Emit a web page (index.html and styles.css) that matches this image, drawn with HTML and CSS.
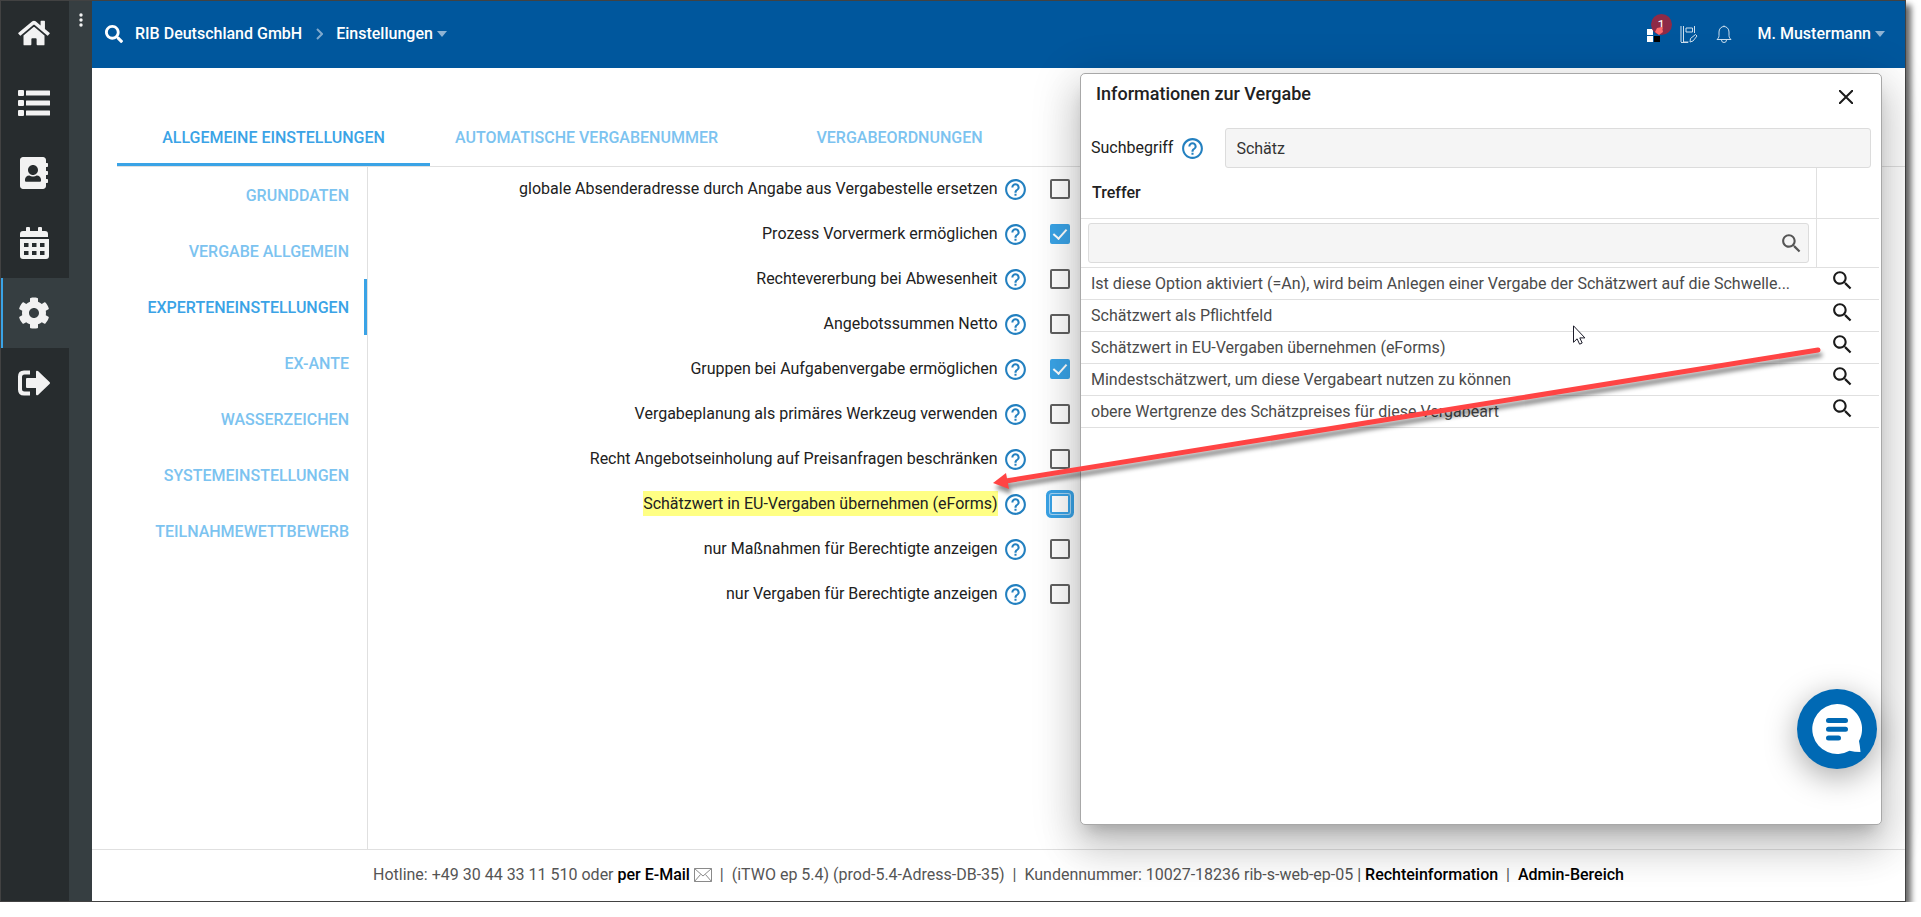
FILE: index.html
```html
<!DOCTYPE html>
<html lang="de">
<head>
<meta charset="utf-8">
<title>Einstellungen – RIB Deutschland GmbH</title>
<link rel="stylesheet" href="styles.css">
</head>
<body>
<svg class="sprite" aria-hidden="true">
  <symbol id="i-help" viewBox="0 0 24 24"><path d="M11 18h2v-2h-2v2zm1-16C6.48 2 2 6.48 2 12s4.48 10 10 10 10-4.48 10-10S17.52 2 12 2zm0 18c-4.41 0-8-3.59-8-8s3.59-8 8-8 8 3.59 8 8-3.59 8-8 8zm0-14c-2.21 0-4 1.79-4 4h2c0-1.1.9-2 2-2s2 .9 2 2c0 2-3 1.75-3 5h2c0-2.25 3-2.5 3-5 0-2.21-1.79-4-4-4z"/></symbol>
  <symbol id="i-search" viewBox="0 0 24 24"><path d="M15.5 14h-.79l-.28-.27C15.41 12.59 16 11.11 16 9.5 16 5.91 13.09 3 9.5 3S3 5.91 3 9.5 5.91 16 9.5 16c1.61 0 3.09-.59 4.23-1.57l.27.28v.79l5 4.99L20.49 19l-4.99-5zm-6 0C7.01 14 5 11.99 5 9.5S7.01 5 9.5 5 14 7.01 14 9.5 11.99 14 9.5 14z"/></symbol>
</svg>

<div class="window">
  <nav class="rail" aria-label="Hauptnavigation">
    <a class="rail-item rail-first" href="#" aria-label="Startseite"><svg width="32" height="28" viewBox="0 0 576 512"><path d="M280.37 148.26L96 300.11V464a16 16 0 0 0 16 16l112.06-.29a16 16 0 0 0 15.92-16V368a16 16 0 0 1 16-16h64a16 16 0 0 1 16 16v95.64a16 16 0 0 0 16 16.05L464 480a16 16 0 0 0 16-16V300L295.67 148.26a12.19 12.19 0 0 0-15.3 0zM571.6 251.47L488 182.56V44.05a12 12 0 0 0-12-12h-56a12 12 0 0 0-12 12v72.61L318.47 43a48 48 0 0 0-61 0L4.34 251.47a12 12 0 0 0-1.6 16.9l25.5 31A12 12 0 0 0 45.15 301l235.22-193.74a12.19 12.19 0 0 1 15.3 0L530.9 301a12 12 0 0 0 16.9-1.6l25.5-31a12 12 0 0 0-1.7-16.93z"/></svg></a>
    <a class="rail-item" href="#" aria-label="Liste"><svg width="32" height="28" viewBox="0 0 32 28"><rect x="0" y="1" width="6" height="6" rx="1"/><rect x="0" y="11" width="6" height="6" rx="1"/><rect x="0" y="21" width="6" height="6" rx="1"/><rect x="8" y="1.5" width="24" height="5" rx=".5"/><rect x="8" y="11.5" width="24" height="5" rx=".5"/><rect x="8" y="21.5" width="24" height="5" rx=".5"/></svg></a>
    <a class="rail-item" href="#" aria-label="Adressbuch"><svg width="28" height="32" viewBox="0 0 448 512"><path d="M436 160c6.6 0 12-5.400 12-12v-40c0-6.600-5.400-12-12-12h-20V48c0-26.500-21.500-48-48-48H48C21.500 0 0 21.500 0 48v416c0 26.500 21.500 48 48 48h320c26.500 0 48-21.500 48-48v-48h20c6.600 0 12-5.400 12-12v-40c0-6.600-5.400-12-12-12h-20v-64h20c6.600 0 12-5.400 12-12v-40c0-6.600-5.400-12-12-12h-20v-64h20zm-228-32c44 0 80 36 80 80s-36 80-80 80-80-36-80-80 36-80 80-80zm128 250c0 10.600-10 19.200-22.400 19.200H102.400C90 397.200 80 388.600 80 378v-19.200c0-31.800 30.100-61.600 67.200-61.600h5c12.300 9.100 35.700 16 55.800 16s43.600-6.900 55.800-16h5c37.100 0 67.200 29.800 67.200 61.600v19.200z"/></svg></a>
    <a class="rail-item" href="#" aria-label="Kalender"><svg width="30" height="32" viewBox="0 0 30 32"><path fill-rule="evenodd" d="M1 10V7a3 3 0 0 1 3-3h3V1q0-1 1-1h2q1 0 1 1v3h8V1q0-1 1-1h2q1 0 1 1v3h3a3 3 0 0 1 3 3v3zM1 12h29v17a3 3 0 0 1-3 3H4a3 3 0 0 1-3-3zM5 16v4h4.500v-4zM13 16v4h4.500v-4zM21 16v4h4.500v-4zM5 24v4h4.500v-4zM13 24v4h4.500v-4zM21 24v4h4.500v-4z"/></svg></a>
    <a class="rail-item rail-active" href="#" aria-label="Einstellungen"><svg width="32" height="32" viewBox="0 0 512 512"><path d="M487.400 315.700l-42.600-24.600c4.300-23.200 4.300-47 0-70.200l42.600-24.600c4.900-2.800 7.100-8.600 5.500-14-11.100-35.600-30-67.800-54.700-94.600-3.800-4.100-10-5.100-14.800-2.300L380.800 110c-17.900-15.400-38.500-27.300-60.800-35.100V25.800c0-5.600-3.900-10.500-9.400-11.700-36.700-8.200-74.300-7.800-109.200 0-5.500 1.200-9.400 6.100-9.400 11.700V75c-22.200 7.900-42.800 19.800-60.800 35.100L88.700 85.500c-4.900-2.800-11-1.900-14.800 2.300-24.700 26.700-43.600 58.900-54.700 94.600-1.700 5.400.6 11.200 5.500 14L67.300 221c-4.300 23.200-4.300 47 0 70.200l-42.600 24.600c-4.900 2.800-7.100 8.600-5.500 14 11.100 35.600 30 67.800 54.700 94.600 3.800 4.100 10 5.100 14.800 2.300l42.600-24.600c17.900 15.400 38.500 27.300 60.800 35.100v49.200c0 5.600 3.900 10.500 9.400 11.700 36.700 8.200 74.300 7.800 109.200 0 5.500-1.200 9.400-6.100 9.400-11.700v-49.200c22.200-7.900 42.800-19.800 60.800-35.100l42.600 24.600c4.900 2.800 11 1.900 14.800-2.300 24.700-26.700 43.600-58.900 54.700-94.600 1.500-5.500-.7-11.300-5.600-14.100zM256 336c-44.100 0-80-35.900-80-80s35.900-80 80-80 80 35.900 80 80-35.900 80-80 80z"/></svg></a>
    <a class="rail-item" href="#" aria-label="Abmelden"><svg width="32" height="26" viewBox="0 0 32 26"><path d="M12 .5v4H6.500Q4 4.500 4 7v12q0 2.500 2.500 2.500H12v4H6Q0 25.500 0 19.500v-13Q0 .5 6 .5zM8 9q0-1 1-1h9V2q0-2 2-1l11.500 11q1 1 0 2L20 25q-2 1-2-1v-6H9q-1 0-1-1z"/></svg></a>
  </nav>
  <div class="handle"><button class="plain" type="button" aria-label="Menü"><svg width="4" height="14" viewBox="0 0 4 14"><circle cx="2" cy="2" r="1.700"/><circle cx="2" cy="7" r="1.700"/><circle cx="2" cy="12" r="1.700"/></svg></button></div>

  <div class="page">
    <header class="topbar">
      <button class="plain top-search" type="button" aria-label="Suchen"><svg width="18" height="18" viewBox="0 0 512 512"><path d="M505 442.700L405.300 343c-4.500-4.500-10.600-7-17-7H372c27.600-35.300 44-79.700 44-128C416 93.100 322.900 0 208 0S0 93.100 0 208s93.100 208 208 208c48.300 0 92.700-16.400 128-44v16.300c0 6.400 2.500 12.500 7 17l99.700 99.700c9.400 9.400 24.600 9.400 33.900 0l28.300-28.300c9.400-9.400 9.400-24.600.1-34zM208 336c-70.700 0-128-57.200-128-128 0-70.700 57.200-128 128-128 70.700 0 128 57.200 128 128 0 70.700-57.200 128-128 128z"/></svg></button>
      <a class="crumb" href="#">RIB Deutschland GmbH</a>
      <svg class="chevron" width="7" height="12" viewBox="0 0 7 12"><path d="M1 1l5 5-5 5"/></svg>
      <button class="plain crumb" type="button">Einstellungen<svg class="caret" width="10" height="6" viewBox="0 0 10 6"><path d="M0 0h10L5 6z"/></svg></button>
      <div class="top-tools">
        <button class="plain apps" type="button" aria-label="Anwendungen">
          <svg width="16" height="16" viewBox="0 0 16 16"><path fill="#fff" d="M0 3h6v6H0zM0 10h6v6H0z"/><path fill="#000" d="M7 10h6v6H7z"/></svg>
          <span class="badge">1</span>
          <svg class="diamond" width="8" height="8" viewBox="0 0 8 8"><path d="M2 1l5-1 1 5-4 3-4-3z"/></svg>
        </button>
        <button class="plain note" type="button" aria-label="Notizen"><svg width="18" height="18" viewBox="0 0 18 18"><path d="M1 1v16M3.500 1v16h5M14.500 1v7M6 3h6.500v4H6zM1 17.500h7M10.500 13.500l5-4 1.500 1.500-4 5-3 1z"/></svg></button>
        <button class="plain bell" type="button" aria-label="Benachrichtigungen"><svg width="16" height="18" viewBox="0 0 16 18"><path d="M1 14.500c1-1 2-2 2-4V7a5 5.500 0 0 1 10 0v3.500c0 2 1 3 2 4zM8 1.500V.5M5.500 15a2.500 2.500 0 0 0 5 0"/></svg></button>
        <button class="plain crumb" type="button">M. Mustermann<svg class="caret" width="10" height="6" viewBox="0 0 10 6"><path d="M0 0h10L5 6z"/></svg></button>
      </div>
    </header>

    <nav class="tabs" aria-label="Bereiche">
      <a class="tab tab-active" href="#">ALLGEMEINE EINSTELLUNGEN</a>
      <a class="tab" href="#">AUTOMATISCHE VERGABENUMMER</a>
      <a class="tab" href="#">VERGABEORDNUNGEN</a>
    </nav>

    <main class="content">
      <nav class="subnav" aria-label="Einstellungen">
        <a class="sub" href="#">GRUNDDATEN</a>
        <a class="sub" href="#">VERGABE ALLGEMEIN</a>
        <a class="sub sub-active" href="#">EXPERTENEINSTELLUNGEN</a>
        <a class="sub" href="#">EX-ANTE</a>
        <a class="sub" href="#">WASSERZEICHEN</a>
        <a class="sub" href="#">SYSTEMEINSTELLUNGEN</a>
        <a class="sub" href="#">TEILNAHMEWETTBEWERB</a>
      </nav>
      <form class="options">
        <div class="option"><label for="o1">globale Absenderadresse durch Angabe aus Vergabestelle ersetzen</label><button class="plain help" type="button" aria-label="Hilfe"><svg><use href="#i-help"/></svg></button><input type="checkbox" id="o1"></div>
        <div class="option"><label for="o2">Prozess Vorvermerk ermöglichen</label><button class="plain help" type="button" aria-label="Hilfe"><svg><use href="#i-help"/></svg></button><input type="checkbox" id="o2" checked></div>
        <div class="option"><label for="o3">Rechtevererbung bei Abwesenheit</label><button class="plain help" type="button" aria-label="Hilfe"><svg><use href="#i-help"/></svg></button><input type="checkbox" id="o3"></div>
        <div class="option"><label for="o4">Angebotssummen Netto</label><button class="plain help" type="button" aria-label="Hilfe"><svg><use href="#i-help"/></svg></button><input type="checkbox" id="o4"></div>
        <div class="option"><label for="o5">Gruppen bei Aufgabenvergabe ermöglichen</label><button class="plain help" type="button" aria-label="Hilfe"><svg><use href="#i-help"/></svg></button><input type="checkbox" id="o5" checked></div>
        <div class="option"><label for="o6">Vergabeplanung als primäres Werkzeug verwenden</label><button class="plain help" type="button" aria-label="Hilfe"><svg><use href="#i-help"/></svg></button><input type="checkbox" id="o6"></div>
        <div class="option"><label for="o7">Recht Angebotseinholung auf Preisanfragen beschränken</label><button class="plain help" type="button" aria-label="Hilfe"><svg><use href="#i-help"/></svg></button><input type="checkbox" id="o7"></div>
        <div class="option"><label for="o8"><mark>Schätzwert in EU-Vergaben übernehmen (eForms)</mark></label><button class="plain help" type="button" aria-label="Hilfe"><svg><use href="#i-help"/></svg></button><input class="focused" type="checkbox" id="o8"></div>
        <div class="option"><label for="o9">nur Maßnahmen für Berechtigte anzeigen</label><button class="plain help" type="button" aria-label="Hilfe"><svg><use href="#i-help"/></svg></button><input type="checkbox" id="o9"></div>
        <div class="option"><label for="o10">nur Vergaben für Berechtigte anzeigen</label><button class="plain help" type="button" aria-label="Hilfe"><svg><use href="#i-help"/></svg></button><input type="checkbox" id="o10"></div>
      </form>
    </main>

    <footer class="footer">
      <p>Hotline: +49 30 44 33 11 510 oder <a href="#">per E-Mail</a> <svg class="mail" width="18" height="14" viewBox="0 0 18 14"><path d="M.5.5h17v13H.5zM.5.5L9 8 17.500.5M.5 13.500l6-7M17.500 13.500l-6-7"/></svg> &nbsp;|&nbsp; (iTWO ep 5.4) (prod-5.4-Adress-DB-35) &nbsp;|&nbsp; Kundennummer: 10027-18236 rib-s-web-ep-05 | <a href="#">Rechteinformation</a> &nbsp;|&nbsp; <a href="#">Admin-Bereich</a></p>
    </footer>
  </div>

  <section class="dialog" role="dialog" aria-labelledby="dlg-title">
    <div class="dialog-head">
      <h2 id="dlg-title">Informationen zur Vergabe</h2>
      <button class="plain close" type="button" aria-label="Schließen"><svg width="14" height="14" viewBox="0 0 14 14"><path d="M0 0l14 14M14 0L0 14"/></svg></button>
    </div>
    <div class="term">
      <label for="term">Suchbegriff</label>
      <button class="plain help" type="button" aria-label="Hilfe"><svg><use href="#i-help"/></svg></button>
      <input class="field" id="term" type="text" value="Schätz">
    </div>
    <table class="hits">
      <thead>
        <tr class="hits-title"><th scope="col">Treffer</th><td></td></tr>
        <tr class="hits-filter"><td><div class="filter"><input class="field" type="text" aria-label="Treffer filtern"><svg class="filter-icon"><use href="#i-search"/></svg></div></td><td></td></tr>
      </thead>
      <tbody>
        <tr><td class="hit">Ist diese Option aktiviert (=An), wird beim Anlegen einer Vergabe der Schätzwert auf die Schwelle...</td><td class="act"><button class="plain" type="button" aria-label="Anzeigen"><svg><use href="#i-search"/></svg></button></td></tr>
        <tr><td class="hit">Schätzwert als Pflichtfeld</td><td class="act"><button class="plain" type="button" aria-label="Anzeigen"><svg><use href="#i-search"/></svg></button></td></tr>
        <tr><td class="hit">Schätzwert in EU-Vergaben übernehmen (eForms)</td><td class="act"><button class="plain" type="button" aria-label="Anzeigen"><svg><use href="#i-search"/></svg></button></td></tr>
        <tr><td class="hit">Mindestschätzwert, um diese Vergabeart nutzen zu können</td><td class="act"><button class="plain" type="button" aria-label="Anzeigen"><svg><use href="#i-search"/></svg></button></td></tr>
        <tr><td class="hit">obere Wertgrenze des Schätzpreises für diese Vergabeart</td><td class="act"><button class="plain" type="button" aria-label="Anzeigen"><svg><use href="#i-search"/></svg></button></td></tr>
      </tbody>
    </table>

    <button class="plain chat" type="button" aria-label="Chat"><svg width="50" height="50" viewBox="0 0 50 50"><path fill="#fff" d="M25 0a25 25 0 0 1 22 37q1 5 1.500 11-6 0-11-1.200A25 25 0 1 1 25 0z"/><path class="chat-lines" d="M16.500 16.500h17M16.500 25.300h17M16.500 34h10"/></svg></button>

    <svg class="arrow" width="840" height="150" viewBox="0 0 840 150" aria-hidden="true"><path d="M828 9L16 140" fill="none" stroke="#ff4444" stroke-width="5" stroke-linecap="round"/><path d="M3 142l13-10 3 16z" fill="#ff4444"/></svg>
    <svg class="cursor" width="13" height="20" viewBox="0 0 13 20" aria-hidden="true"><path d="M.5.800v16.500l3.600-3.500 2.500 5.400 2.600-1.200-2.400-5.100h5.100z" fill="#fff" stroke="#1c1c2a"/></svg>
  </section>
</div>
</body>
</html>
```

FILE: styles.css
```css
* { box-sizing: border-box; }

body {
  margin: 0;
  background: #fff;
  color: #212121;
  font: 16px/24px Roboto, "Liberation Sans", sans-serif;
}

a { color: inherit; text-decoration: none; }
svg { display: block; }
.sprite { display: none; }

.plain {
  margin: 0;
  padding: 0;
  border: 0;
  background: none;
  color: inherit;
  font: inherit;
  cursor: pointer;
}

.window {
  position: relative;
  display: flex;
  height: calc(100vh - 15px);
  margin-right: 15px;
  border: 1px solid #424242;
  box-shadow: 5px 5px 6px rgba(0, 0, 0, .6);
}

/* icon rail */
.rail {
  flex: none;
  width: 68px;
  background: #272c2e;
}
.rail-item {
  display: flex;
  align-items: center;
  justify-content: center;
  height: 70px;
  padding-right: 2px;
}
.rail-first { height: 67px; padding-bottom: 3px; }
.rail-active {
  background: #363e41;
  border-left: 2px solid #3aa3e6;
  padding-right: 4px;
}
.rail-item svg { fill: #f2f2f2; }
.handle {
  flex: none;
  display: flex;
  justify-content: center;
  align-items: flex-start;
  width: 23px;
  padding-top: 12px;
  background: #363e41;
}
.handle svg { fill: #f2f2f2; }

.page {
  flex: 1;
  min-width: 0;
  display: flex;
  flex-direction: column;
}

/* top bar */
.topbar {
  flex: none;
  display: flex;
  align-items: center;
  height: 67px;
  padding: 0 20px 2px 13px;
  background: #00579d;
  color: #fff;
  font-weight: 500;
}
.top-search { margin-right: 12px; }
.top-search svg { fill: #fff; }
.crumb { display: flex; align-items: center; white-space: nowrap; }
.chevron { margin: 0 13px 0 14px; fill: none; stroke: #7fa9cd; stroke-width: 2; }
.caret { margin-left: 4px; fill: #8fb3d3; }
.top-tools { display: flex; align-items: center; margin-left: auto; }
.apps { position: relative; width: 16px; margin-right: 17px; }
.badge {
  position: absolute;
  left: 4px;
  top: -12px;
  width: 21px;
  height: 21px;
  border-radius: 50%;
  background: #8e2a47;
  font-size: 13px;
  font-weight: 400;
  line-height: 21px;
}
.diamond { position: absolute; left: 8px; top: 1px; fill: #ff6b6b; }
.note { margin-right: 18px; }
.note svg, .bell svg { fill: none; stroke: #cfe0ee; stroke-width: 1; }
.bell { margin-right: 26px; }

/* tabs */
.tabs {
  flex: none;
  display: flex;
  align-items: flex-end;
  height: 99px;
  margin-left: 25px;
  border-bottom: 1px solid #e0e0e0;
}
.tab {
  width: 313px;
  padding: 14px 0 13px;
  border-bottom: 3px solid transparent;
  color: #7cc3f0;
  font-weight: 500;
  text-align: center;
}
.tab-active { color: #3aa3e6; border-bottom-color: #3aa3e6; }

/* content */
.content {
  flex: 1;
  display: flex;
  min-height: 0;
  margin-left: 25px;
}
.subnav {
  flex: none;
  width: 251px;
  border-right: 1px solid #e0e0e0;
}
.sub {
  display: block;
  height: 56px;
  padding-right: 15px;
  border-right: 3px solid transparent;
  color: #7cc3f0;
  font-weight: 500;
  line-height: 58px;
  text-align: right;
}
.sub-active { color: #3aa3e6; border-right-color: #3aa3e6; }

.options { flex: 1; padding-right: 26px; }
.option {
  display: grid;
  grid-template-columns: 41.667% 35px 54px;
  align-items: center;
  height: 44px;
  margin-bottom: 1px;
}
.option label { text-align: right; white-space: nowrap; }
.option mark {
  padding: 3px 0;
  background: #ffff84;
  color: inherit;
}
.help { display: block; justify-self: center; }
.help svg { width: 25px; height: 25px; fill: #2380c0; }

.option input {
  appearance: none;
  width: 20px;
  height: 20px;
  margin: 0;
  justify-self: center;
  border: 2px solid #616161;
  border-radius: 2px;
}
.option input:checked {
  border-color: #3aa3e6;
  background: #3aa3e6;
  display: grid;
  place-items: center;
}
.option input:checked::before {
  content: "";
  width: 6px;
  height: 11px;
  margin-bottom: 3px;
  border: solid #fff;
  border-width: 0 2px 2px 0;
  transform: rotate(42deg);
}
.option .focused {
  border-color: #3aa3e6;
  box-shadow: 0 0 0 1px #a6d6f5, 0 0 0 4px #3aa3e6;
}

.footer {
  flex: none;
  height: 52px;
  border-top: 1px solid #e0e0e0;
  color: #555;
  line-height: 50px;
  text-align: center;
}
.footer p { margin: 0; }
.footer a { color: #000; font-weight: 500; }
.mail {
  display: inline-block;
  vertical-align: -2px;
  fill: none;
  stroke: #8a8a8a;
}

/* dialog */
.dialog {
  position: absolute;
  top: 72px;
  right: 23px;
  width: 802px;
  height: 752px;
  background: #fff;
  border: 1px solid #a8a8a8;
  border-radius: 5px;
  box-shadow: 0 11px 15px -7px rgba(0, 0, 0, .2), 0 24px 38px 3px rgba(0, 0, 0, .14), 0 9px 46px 8px rgba(0, 0, 0, .12);
}
.dialog-head {
  display: flex;
  align-items: center;
  justify-content: space-between;
  height: 46px;
  padding: 0 28px 0 15px;
}
.dialog h2 {
  margin: 0;
  padding-bottom: 7px;
  font-size: 18px;
  font-weight: 500;
}
.close svg { fill: none; stroke: #1b1b1b; stroke-width: 2; }
.term {
  display: flex;
  align-items: center;
  padding: 8px 10px 0;
}
.term label { margin-right: 7px; }
.term .help { margin-right: 20px; }
.field {
  flex: 1;
  min-width: 0;
  width: 100%;
  height: 40px;
  padding: 0 10px;
  border: 1px solid #dcdcdc;
  border-radius: 3px;
  background: #f5f5f5;
  color: #333;
  font: inherit;
}

.hits {
  width: calc(100% - 2px);
  table-layout: fixed;
  border-collapse: separate;
  border-spacing: 0;
}
.hits th, .hits td {
  padding: 0;
  border-bottom: 1px solid #e0e0e0;
}
.hits th:last-child, .hits td:last-child { width: 62px; }
.hits-title { height: 51px; }
.hits .hits-title th {
  padding-left: 11px;
  border-right: 1px solid #e0e0e0;
  font-weight: 500;
  text-align: left;
}
.hits-filter { height: 49px; }
.hits .hits-filter td:first-child {
  padding: 0 7px;
  border-right: 1px solid #e0e0e0;
}
.filter { position: relative; display: flex; }
.filter-icon {
  position: absolute;
  right: 5px;
  top: 8px;
  width: 25px;
  height: 25px;
  fill: #555;
}
.hits tbody tr { height: 32px; }
.hits .hit {
  padding-left: 10px;
  color: #4a4a4a;
  overflow: hidden;
  white-space: nowrap;
}
.act { vertical-align: top; }
.act button { display: block; height: 24px; margin-left: 13px; }
.act svg { width: 25px; height: 25px; fill: #1b1b1b; }

.chat {
  position: absolute;
  right: 4px;
  bottom: 55px;
  display: grid;
  place-items: center;
  width: 80px;
  height: 80px;
  border-radius: 50%;
  background: #0069b4;
  box-shadow: 0 8px 32px rgba(0, 0, 0, .35);
}
.chat-lines {
  fill: none;
  stroke: #0069b4;
  stroke-width: 5;
  stroke-linecap: round;
}

.arrow {
  position: absolute;
  left: -91px;
  top: 267px;
  overflow: visible;
  filter: drop-shadow(2px 5px 2px rgba(0, 0, 0, .45));
  pointer-events: none;
}
.cursor { position: absolute; left: 492px; top: 251px; }
```
